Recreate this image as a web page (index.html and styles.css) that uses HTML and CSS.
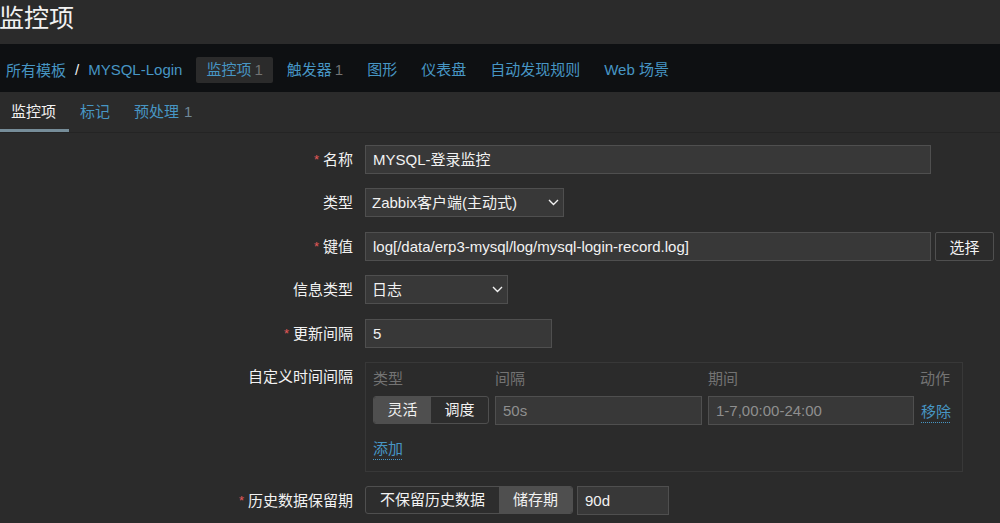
FILE: index.html
```html
<!DOCTYPE html>
<html lang="zh">
<head>
<meta charset="utf-8">
<title>监控项</title>
<link rel="stylesheet" href="styles.css">
</head>
<body>
<header class="page-header"><h1 class="page-title">监控项</h1></header>
<nav class="navbar">
  <div class="crumbs"><a class="link">所有模板</a><span class="sep">/</span><a class="link">MYSQL-Login</a></div>
  <ul class="nav-items">
    <li class="nav-item active"><span class="link">监控项</span><span class="count">1</span></li>
    <li class="nav-item"><span class="link">触发器</span><span class="count">1</span></li>
    <li class="nav-item"><span class="link">图形</span></li>
    <li class="nav-item"><span class="link">仪表盘</span></li>
    <li class="nav-item"><span class="link">自动发现规则</span></li>
    <li class="nav-item"><span class="link">Web 场景</span></li>
  </ul>
</nav>
<div class="tabs">
  <span class="tab active">监控项</span>
  <span class="tab">标记</span>
  <span class="tab">预处理<span class="tab-count">1</span></span>
</div>
<form class="form">
  <label class="lbl"><span class="req">*</span>名称</label>
  <div class="field"><div class="input w-name">MYSQL-登录监控</div></div>

  <label class="lbl">类型</label>
  <div class="field"><div class="input select w-type">Zabbix客户端(主动式)<svg class="chev" width="11" height="7" viewBox="0 0 11 7"><polyline points="1,1 5.5,5.5 10,1" fill="none" stroke="#f2f2f2" stroke-width="1.4"/></svg></div></div>

  <label class="lbl"><span class="req">*</span>键值</label>
  <div class="field row"><div class="input w-name">log[/data/erp3-mysql/log/mysql-login-record.log]</div><button type="button" class="btn">选择</button></div>

  <label class="lbl">信息类型</label>
  <div class="field"><div class="input select w-info">日志<svg class="chev" width="11" height="7" viewBox="0 0 11 7"><polyline points="1,1 5.5,5.5 10,1" fill="none" stroke="#f2f2f2" stroke-width="1.4"/></svg></div></div>

  <label class="lbl"><span class="req">*</span>更新间隔</label>
  <div class="field"><div class="input w-upd">5</div></div>

  <label class="lbl">自定义时间间隔</label>
  <div class="field">
    <div class="intervals">
      <div class="int-grid">
        <span class="th">类型</span><span class="th">间隔</span><span class="th">期间</span><span class="th">动作</span>
        <div class="seg seg-small"><span class="seg-btn on w-flex">灵活</span><span class="seg-btn w-flex">调度</span></div>
        <div class="input dim">50s</div>
        <div class="input dim">1-7,00:00-24:00</div>
        <span class="link dotted act">移除</span>
      </div>
      <div class="add"><span class="link dotted">添加</span></div>
    </div>
  </div>

  <label class="lbl"><span class="req">*</span>历史数据保留期</label>
  <div class="field row">
    <div class="seg"><span class="seg-btn w-nokeep">不保留历史数据</span><span class="seg-btn on w-store">储存期</span></div>
    <div class="input w-90">90d</div>
  </div>
</form>
</body>
</html>
```

FILE: styles.css
```css
* { box-sizing: border-box; }
html, body { margin: 0; padding: 0; }
body {
  background: #2b2b2b;
  color: #f2f2f2;
  font-family: "Liberation Sans", "Noto Sans CJK SC", sans-serif;
  font-size: 15px;
  width: 1000px;
  height: 523px;
  overflow: hidden;
}
.page-header { height: 44px; }
.page-title {
  margin: 0 0 0 -1px;
  font-size: 25px;
  font-weight: normal;
  line-height: 36px;
  color: #f2f2f2;
}
.navbar {
  height: 48px;
  background: #0e1012;
  display: flex;
  align-items: center;
  padding-left: 6px;
  padding-top: 3px;
}
.link { color: #4796c4; cursor: pointer; }
.crumbs { display: flex; align-items: center; }
.sep { color: #f2f2f2; margin: 0 9px; }
.nav-items {
  list-style: none;
  margin: 0 0 0 14px;
  padding: 0;
  display: flex;
  align-items: center;
}
.nav-item {
  height: 26px;
  line-height: 26px;
  padding: 0 10px;
  margin-right: 4px;
  border-radius: 2px;
}
.nav-item.active { background: #2b2b2b; }
.count { color: #737373; margin-left: 3px; }
.tabs {
  height: 41px;
  display: flex;
  align-items: flex-start;
  border-bottom: 1px solid #242424;
}
.tab {
  padding: 3px 13px 0 11px;
  line-height: 34px;
  color: #4796c4;
  border-bottom: 3px solid transparent;
}
.tab.active { color: #f2f2f2; border-bottom-color: #768d99; }
.tab-count { color: #6f8796; margin-left: 5px; }
.form {
  margin: 0;
  padding-top: 12px;
  display: grid;
  grid-template-columns: 353px auto;
  column-gap: 12px;
  row-gap: 14.4px;
  align-items: start;
}
.lbl {
  text-align: right;
  line-height: 29px;
  color: #f2f2f2;
  white-space: nowrap;
}
.req { color: #e45959; font-size: 13px; margin-right: 4px; vertical-align: 1px; }
.field { display: flex; }
.row { gap: 4px; align-items: flex-start; }
.input {
  height: 29px;
  line-height: 27px;
  background: #383838;
  border: 1px solid #4f4f4f;
  padding: 0 7px;
  color: #f2f2f2;
  white-space: nowrap;
  overflow: hidden;
}
.select { position: relative; padding: 0 24px 0 6px; }
.chev { position: absolute; right: 4px; top: 10px; }
.w-name { width: 566px; }
.w-type { width: 199px; }
.w-info { width: 143px; }
.w-upd { width: 187px; }
.w-90 { width: 92px; }
.btn {
  height: 29px;
  width: 59px;
  background: #2b2b2b;
  border: 1px solid #4f4f4f;
  border-radius: 2px;
  color: #f2f2f2;
  font: inherit;
  padding: 0;
}
.intervals {
  width: 598px;
  height: 110px;
  border: 1px solid #383838;
  padding: 5px 11px 0 7px;
}
.int-grid {
  display: grid;
  grid-template-columns: 116px 207px 206px auto;
  column-gap: 6px;
  row-gap: 6px;
  align-items: center;
}
.th { color: #737373; line-height: 22px; }
.dim { color: #8f8f8f; }
.dotted {
  text-decoration: underline dotted;
  text-underline-offset: 5px;
  text-decoration-thickness: 1px;
}
.act { padding-left: 1px; }
.add { margin-top: 13px; line-height: 22px; }
.seg {
  display: flex;
  height: 28px;
  border: 1px solid #4f4f4f;
  border-radius: 3px;
  overflow: hidden;
  background: #2d2d2d;
}
.seg-btn {
  line-height: 26px;
  text-align: center;
  color: #f2f2f2;
}
.seg-btn.on { background: #4f4f4f; }
.w-flex { width: 57px; }
.w-nokeep { width: 133px; }
.w-store { width: 73px; }
```
